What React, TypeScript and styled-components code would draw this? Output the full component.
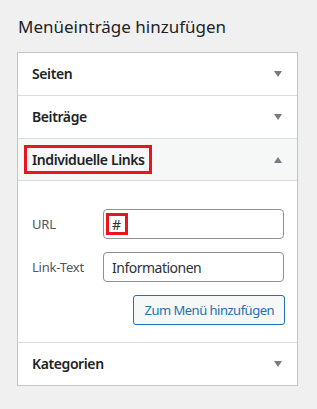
import React from "react";
import styled, { createGlobalStyle } from "styled-components";

const Global = createGlobalStyle`
  html, body { margin: 0; padding: 0; background: #f0f0f1; }
  body { font-family: "Noto Sans", "Open Sans", sans-serif; color: #1d2327; }
  * { box-sizing: border-box; }
`;

const Page = styled.div`
  padding: 16px 20px 0 17px;
`;

const Title = styled.h2`
  margin: 0 0 14px 1px;
  font-size: 17px;
  font-weight: 400;
  line-height: 22px;
  color: #1d2327;
`;

const Panel = styled.div`
  width: 281px;
  background: #fff;
  border: 1px solid #c3c4c7;
  box-shadow: 0 1px 1px rgba(0, 0, 0, 0.04);
`;

const Section = styled.div<{ $last?: boolean }>`
  border-bottom: ${(p) => (p.$last ? "none" : "1px solid #dcdcde")};
`;

const Header = styled.div<{ $open?: boolean }>`
  display: flex;
  align-items: center;
  justify-content: space-between;
  height: 42px;
  padding: 0 15px 0 14px;
  background: ${(p) => (p.$open ? "#f6f7f7" : "#fff")};
  border-bottom: ${(p) => (p.$open ? "1px solid #dcdcde" : "none")};
`;

const HeaderText = styled.span<{ $marked?: boolean }>`
  position: relative;
  font-size: 14px;
  font-weight: 600;
  line-height: 20px;
  letter-spacing: -0.4px;
  color: #1d2327;
  &::after {
    content: "";
    display: ${(p) => (p.$marked ? "block" : "none")};
    position: absolute;
    left: -8px;
    right: -7px;
    top: -5px;
    bottom: -4px;
    border: 3px solid #e8141e;
  }
`;

const Arrow = styled.span<{ $up?: boolean }>`
  width: 0;
  height: 0;
  border-left: 4px solid transparent;
  border-right: 4px solid transparent;
  ${(p) =>
    p.$up
      ? "border-bottom: 6px solid #787c82;"
      : "border-top: 6px solid #787c82;"}
`;

const Body = styled.div`
  padding: 28px 13px 17px 14px;
  display: flex;
  flex-direction: column;
  gap: 13px;
`;

const FieldRow = styled.div`
  display: flex;
  align-items: center;
`;

const Label = styled.label`
  width: 71px;
  font-size: 13px;
  letter-spacing: -0.2px;
  color: #50575e;
`;

const Input = styled.div`
  flex: 1;
  height: 30px;
  display: flex;
  align-items: center;
  padding: 0 8px;
  border: 1px solid #8c8f94;
  border-radius: 4px;
  background: #fff;
  font-size: 14px;
  letter-spacing: -0.5px;
  color: #2c3338;
`;

const Mark = styled.span`
  position: relative;
  &::after {
    content: "";
    position: absolute;
    left: -6px;
    right: -7px;
    top: -2px;
    bottom: -1px;
    border: 3px solid #e8141e;
  }
`;

const Actions = styled.div`
  display: flex;
  justify-content: flex-end;
  margin-right: -1px;
`;

const Button = styled.button`
  height: 30px;
  padding: 0 10px;
  border: 1px solid #2271b1;
  border-radius: 3px;
  background: #f6f7f7;
  color: #2271b1;
  font-family: inherit;
  font-size: 13px;
  letter-spacing: -0.5px;
  cursor: pointer;
`;

export default function App() {
  return (
    <>
      <Global />
      <Page>
        <Title>Menüeinträge hinzufügen</Title>
        <Panel>
          <Section>
            <Header>
              <HeaderText>Seiten</HeaderText>
              <Arrow />
            </Header>
          </Section>
          <Section>
            <Header>
              <HeaderText>Beiträge</HeaderText>
              <Arrow />
            </Header>
          </Section>
          <Section>
            <Header $open>
              <HeaderText $marked>Individuelle Links</HeaderText>
              <Arrow $up />
            </Header>
            <Body>
              <FieldRow>
                <Label>URL</Label>
                <Input>
                  <Mark>#</Mark>
                </Input>
              </FieldRow>
              <FieldRow>
                <Label>Link-Text</Label>
                <Input>Informationen</Input>
              </FieldRow>
              <Actions>
                <Button>Zum Menü hinzufügen</Button>
              </Actions>
            </Body>
          </Section>
          <Section $last>
            <Header>
              <HeaderText>Kategorien</HeaderText>
              <Arrow />
            </Header>
          </Section>
        </Panel>
      </Page>
    </>
  );
}
